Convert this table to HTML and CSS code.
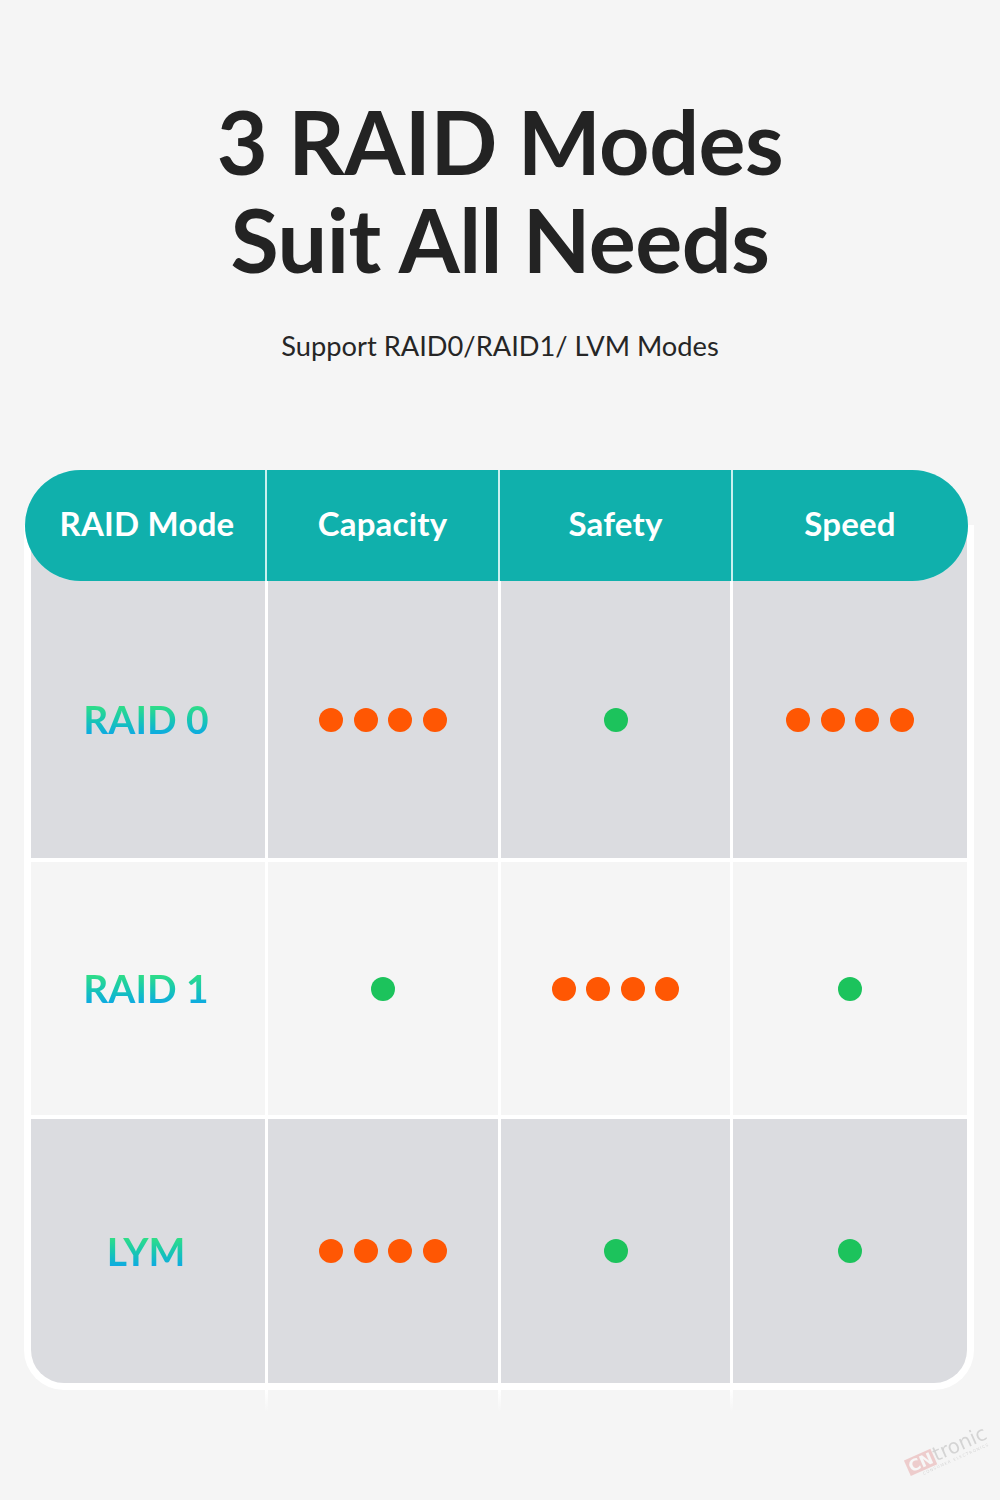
FILE: index.html
```html
<!DOCTYPE html>
<html lang="en">
<head>
<meta charset="utf-8">
<title>3 RAID Modes</title>
<link rel="stylesheet" href="styles.css">
</head>
<body>
<main class="page">
  <h1 class="title">3 RAID Modes<br>Suit All Needs</h1>
  <p class="subtitle">Support RAID0/RAID1/ LVM Modes</p>

  <section class="table">
    <div class="head">
      <div class="hcell">RAID Mode</div>
      <div class="hcell">Capacity</div>
      <div class="hcell">Safety</div>
      <div class="hcell">Speed</div>
    </div>
    <div class="frame">
      <div class="rows">
        <div class="row row-first gray">
          <div class="cell"><span class="mode">RAID 0</span></div>
          <div class="cell"><span class="dots"><i class="dot o"></i><i class="dot o"></i><i class="dot o"></i><i class="dot o"></i></span></div>
          <div class="cell"><span class="dots"><i class="dot g"></i></span></div>
          <div class="cell"><span class="dots"><i class="dot o"></i><i class="dot o"></i><i class="dot o"></i><i class="dot o"></i></span></div>
        </div>
        <div class="row row-mid light">
          <div class="cell"><span class="mode">RAID 1</span></div>
          <div class="cell"><span class="dots"><i class="dot g"></i></span></div>
          <div class="cell"><span class="dots"><i class="dot o"></i><i class="dot o"></i><i class="dot o"></i><i class="dot o"></i></span></div>
          <div class="cell"><span class="dots"><i class="dot g"></i></span></div>
        </div>
        <div class="row row-last gray">
          <div class="cell"><span class="mode">LYM</span></div>
          <div class="cell"><span class="dots"><i class="dot o"></i><i class="dot o"></i><i class="dot o"></i><i class="dot o"></i></span></div>
          <div class="cell"><span class="dots"><i class="dot g"></i></span></div>
          <div class="cell"><span class="dots"><i class="dot g"></i></span></div>
        </div>
      </div>
    </div>
    <div class="stubs">
      <div></div><div></div><div></div><div></div>
    </div>
  </section>

  <div class="watermark"><span class="wm-cn">CN</span><span class="wm-tronic">tronic</span><span class="wm-sub">CONSUMER ELECTRONICS</span></div>
</main>
</body>
</html>
```

FILE: styles.css
```css
html, body {
  margin: 0;
  padding: 0;
}
body {
  background: #f5f5f5;
  font-family: Lato, "Open Sans", "Liberation Sans", sans-serif;
  color: #222222;
}
.page {
  position: relative;
  width: 1000px;
  height: 1500px;
  overflow: hidden;
  padding-top: 92px;
  box-sizing: border-box;
}
.title {
  margin: 0;
  text-align: center;
  font-size: 88px;
  line-height: 98px;
  font-weight: 700;
  color: #232323;
  letter-spacing: -0.5px;
}
.subtitle {
  margin: 43px 0 0;
  text-align: center;
  font-size: 27.25px;
  line-height: 30px;
  font-weight: 400;
  color: #262626;
}
.table {
  width: 950px;
  margin: 109px 0 0 24px;
}
.head {
  position: relative;
  z-index: 2;
  display: grid;
  grid-template-columns: 240px 231px 231px 236px;
  column-gap: 2px;
  height: 111px;
  margin: 0 6px 0 1px;
  border-radius: 56px;
  overflow: hidden;
  background: #c9f0ef;
}
.hcell {
  background: #10b0ac;
  color: #ffffff;
  font-size: 33px;
  font-weight: 700;
  display: flex;
  align-items: center;
  justify-content: center;
  padding-bottom: 6px;
  box-sizing: border-box;
  letter-spacing: 0.2px;
}
.head .hcell:first-child {
  padding-left: 4px;
}
.head .hcell:last-child {
  padding-right: 2px;
}
.frame {
  position: relative;
  z-index: 1;
  margin-top: -56px;
  background: #ffffff;
  padding: 0 7px 7px;
  border-radius: 0 0 40px 40px;
}
.rows {
  display: flex;
  flex-direction: column;
  row-gap: 4px;
  border-radius: 0 0 33px 33px;
  overflow: hidden;
}
.row {
  display: grid;
  grid-template-columns: 234px 230px 229px 234px;
  column-gap: 3px;
}
.row-first { height: 333px; }
.row-first .cell { padding-top: 56px; }
.row-mid { height: 253px; }
.row-last { height: 264px; }
.cell {
  display: flex;
  align-items: center;
  justify-content: center;
  box-sizing: border-box;
}
.gray .cell { background: #dbdce0; }
.light .cell { background: #f5f5f5; }
.row .cell:first-child { padding-right: 4px; }
.mode {
  font-size: 39px;
  font-weight: 700;
  line-height: 1;
  background: linear-gradient(180deg, #34e27e 15%, #18c8b0 50%, #0aa2f0 90%);
  -webkit-background-clip: text;
  background-clip: text;
  color: transparent;
  padding: 4px 0;
}
.dots {
  display: flex;
  gap: 10.5px;
}
.dot {
  display: block;
  width: 24px;
  height: 24px;
  border-radius: 50%;
}
.dot.o { background: #ff5703; }
.dot.g { background: #1cc35c; }
.stubs {
  display: grid;
  grid-template-columns: 234px 230px 229px 234px;
  column-gap: 3px;
  height: 21px;
  margin: 0 7px;
  background: linear-gradient(180deg, #ffffff, #f5f5f5);
}
.stubs div {
  background: #f5f5f5;
}
.watermark {
  position: absolute;
  left: 904px;
  top: 1438px;
  width: 92px;
  transform: rotate(-24deg);
  transform-origin: center center;
  opacity: 0.2;
  font-family: "DejaVu Sans", sans-serif;
  display: flex;
  align-items: baseline;
  flex-wrap: wrap;
}
.wm-cn {
  background: #d23030;
  color: #ffffff;
  font-weight: 700;
  font-size: 16px;
  line-height: 17px;
  padding: 0 2px;
}
.wm-tronic {
  color: #555555;
  font-size: 20px;
  line-height: 20px;
}
.wm-sub {
  width: 100%;
  font-size: 4px;
  line-height: 6px;
  letter-spacing: 1px;
  color: #555555;
  padding-left: 12px;
  white-space: nowrap;
}
```
